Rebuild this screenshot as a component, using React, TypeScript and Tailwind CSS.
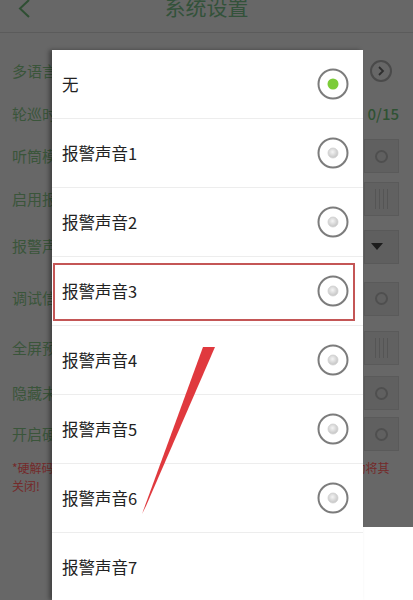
import React from "react";

const font = { fontFamily: '"Noto Sans CJK SC", "Noto Sans", sans-serif' };

function BoxCircle() {
  return (
    <div className="w-[35px] h-[34px] bg-[#606060] border border-[#5a5a5a] flex items-center justify-center">
      <div className="w-[13px] h-[13px] rounded-full border-2 border-[#4f4f4f]" />
    </div>
  );
}
function BoxLines() {
  return (
    <div className="w-[35px] h-[34px] bg-[#616161] border border-[#5a5a5a] flex items-center justify-center gap-[3px]">
      <div className="w-px h-[20px] bg-[#555]" />
      <div className="w-px h-[20px] bg-[#555]" />
      <div className="w-px h-[20px] bg-[#555]" />
      <div className="w-px h-[20px] bg-[#555]" />
    </div>
  );
}
function BoxDrop() {
  return (
    <div className="w-[35px] h-[34px] bg-[#5f5f5f] border border-[#595959] flex items-center justify-start pl-[6px]">
      <svg width="12" height="7" viewBox="0 0 12 7">
        <polygon points="0,0 12,0 6,7" fill="#1c1c1c" />
      </svg>
    </div>
  );
}

function Radio({ on }: { on?: boolean }) {
  return (
    <svg width="32" height="32" viewBox="0 0 32 32">
      <defs>
        <radialGradient id="g" cx="0.45" cy="0.4" r="0.6">
          <stop offset="0" stopColor="#f4f4f4" />
          <stop offset="1" stopColor="#c4c4c4" />
        </radialGradient>
      </defs>
      <circle cx="16" cy="16" r="14.5" fill="#fff" stroke="#7c7c7c" strokeWidth="2" />
      {on ? (
        <circle cx="16" cy="16" r="5.5" fill="#7ccc38" />
      ) : (
        <circle cx="16" cy="16" r="5" fill="url(#g)" stroke="#d0d0d0" strokeWidth="0.8" />
      )}
    </svg>
  );
}

const items = ["无", "报警声音1", "报警声音2", "报警声音3", "报警声音4", "报警声音5", "报警声音6", "报警声音7"];

export default function App() {
  const rows: { label: string; h: string; right: React.ReactNode }[] = [
    {
      label: "多语言设置",
      h: "h-[44px]",
      right: (
        <div className="w-[22px] h-[22px] rounded-full border-2 border-[#4a4a4a] flex items-center justify-center mr-[7px]">
          <svg width="8" height="10" viewBox="0 0 8 10">
            <polyline points="2,1 6,5 2,9" fill="none" stroke="#2e2e2e" strokeWidth="1.8" />
          </svg>
        </div>
      ),
    },
    { label: "轮巡时间", h: "h-[42px]", right: <span className="text-[15px] text-[#2f5233] font-medium">0/15</span> },
    { label: "听筒模式", h: "h-[42px]", right: <BoxCircle /> },
    { label: "启用报警", h: "h-[44px]", right: <BoxLines /> },
    { label: "报警声音", h: "h-[51px]", right: <BoxDrop /> },
    { label: "调试信息", h: "h-[53px]", right: <BoxCircle /> },
    { label: "全屏预览", h: "h-[46px]", right: <BoxLines /> },
    { label: "隐藏未用", h: "h-[44px]", right: <BoxCircle /> },
    { label: "开启硬解", h: "h-[38px]", right: <BoxCircle /> },
  ];

  return (
    <div className="relative w-[413px] h-[600px] overflow-hidden bg-[#676767]" style={font}>
      {/* background page */}
      <div className="flex flex-col">
        <div className="h-[33px] border-b border-[#5b5b5b] flex items-center relative">
          <svg className="absolute left-[18px] top-[-1px]" width="13" height="19" viewBox="0 0 13 19">
            <polyline points="11,1 2,9.5 11,18" fill="none" stroke="#2f4f33" strokeWidth="2" />
          </svg>
          <div className="w-full text-center text-[21px] leading-none text-[#33523a] -mt-[19px]">系统设置</div>
        </div>
        <div className="h-[16px]" />
        {rows.map((r) => (
          <div key={r.label} className={`${r.h} flex items-center justify-between pl-[12px] pr-[14px]`}>
            <span className="text-[15px] text-[#3a553a]">{r.label}</span>
            {r.right}
          </div>
        ))}
        <div className="pt-[6px] pl-[12px] text-[12px] leading-[18px] text-[#742a2a] whitespace-nowrap">
          *硬解码开启后如出现视频画面花屏卡顿或黑屏异常情况系统将自动将其
          <br />
          关闭!
        </div>
      </div>

      {/* bottom-right white patch */}
      <div className="absolute left-[363px] top-[527px] right-0 bottom-0 bg-white" />

      {/* dialog */}
      <div className="absolute left-[52px] top-[50px] w-[311px] bottom-0 bg-white shadow-[-3px_0_4px_rgba(0,0,0,0.35)] flex flex-col">
        {items.map((t, i) => (
          <div key={t} className="h-[69px] shrink-0 border-b border-[#ededed] flex items-center justify-between pl-[10px] pr-[14px]">
            <span className="text-[16.5px] text-[#222]">{t}</span>
            {i < 7 && <Radio on={i === 0} />}
          </div>
        ))}
      </div>

      {/* red highlight */}
      <div className="absolute left-[53px] top-[263px] w-[302px] h-[58px] border-2 border-[#c45656]" />

      {/* red stroke */}
      <svg className="absolute left-0 top-0 pointer-events-none" width="413" height="600" viewBox="0 0 413 600">
        <polygon points="203,347 215,347 146,506 142,514" fill="#e0393e" />
      </svg>
    </div>
  );
}
